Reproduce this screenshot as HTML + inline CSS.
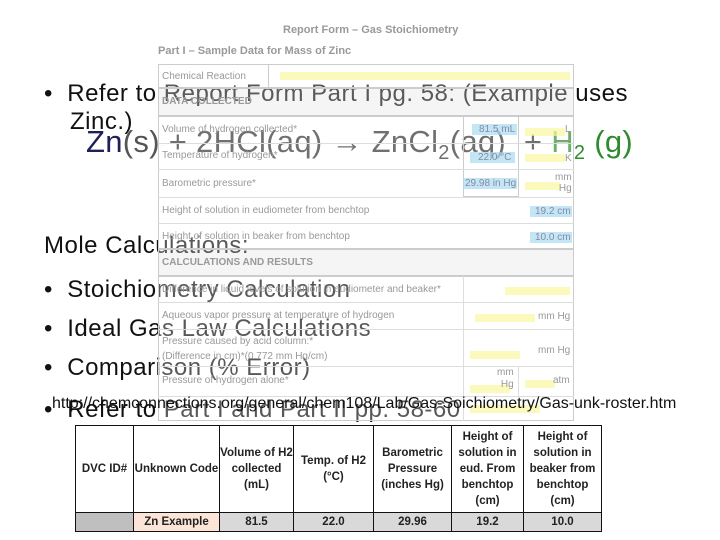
<!DOCTYPE html>
<html><head><meta charset="utf-8"><style>
*{margin:0;padding:0;box-sizing:border-box}
body{width:720px;height:540px;background:#fff;position:relative;overflow:hidden;font-family:"Liberation Sans",sans-serif}
.t{position:absolute;white-space:nowrap;color:#111;font-size:24px;letter-spacing:0.5px}
.f{position:absolute;font-size:10px;color:#999;white-space:nowrap}
.box{position:absolute;border:1px solid #ccc;background:rgba(255,255,255,0.3)}
.hdr{position:absolute;background:rgba(225,225,225,0.35);border:1px solid #ccc}
.hl{position:absolute;height:8px;background:#fbf7a0;opacity:.7}
.bl{position:absolute;height:11px;background:#a9dcef;opacity:.7}
table{position:absolute;left:75px;top:425px;border-collapse:collapse;font-size:11.5px;font-weight:bold;color:#222;background:#fff}
td{border:1px solid #111;text-align:center;vertical-align:middle;line-height:16px;padding:0}
</style></head><body>
<div class="t" style="left:44px;top:80px">•&nbsp; Refer to Report Form Part I pg. 58: (Example uses</div>
<div class="t" style="left:70px;top:108px">Zinc.)</div>
<div class="t" style="left:86px;top:124px;font-size:31px;letter-spacing:0.3px;color:#333"><span style="color:#1f1f5a">Zn</span><span style="color:#555">(s)</span> + 2HCl(aq) &rarr; ZnCl<sub style="font-size:20px">2</sub>(aq) &nbsp;+ <span style="color:#2e8b2e">H<sub style="font-size:20px">2</sub> (g)</span></div>
<div class="t" style="left:44px;top:232px">Mole Calculations:</div>
<div class="t" style="left:44px;top:276px">•&nbsp; Stoichiometry Calculation</div>
<div class="t" style="left:44px;top:315px">•&nbsp; Ideal Gas Law Calculations</div>
<div class="t" style="left:44px;top:354px">•&nbsp; Comparison (% Error)</div>
<div class="t" style="left:44px;top:396px">•&nbsp; Refer to Part I and Part II pp. 58-60</div>
<div class="f" style="left:283px;top:24px;font-size:11px;font-weight:bold">Report Form – Gas Stoichiometry</div>
<div class="f" style="left:158px;top:45px;font-size:11px;font-weight:bold">Part I – Sample Data for Mass of Zinc</div>
<div class="box" style="left:158px;top:64px;width:416px;height:24px"></div>
<div class="f" style="left:162px;top:71px">Chemical Reaction</div>
<div class="box" style="left:268px;top:64px;width:0;height:24px;border-width:0 0 0 1px"></div>
<div class="hl" style="left:280px;top:72px;width:290px"></div>
<div class="hdr" style="left:158px;top:88px;width:416px;height:28px"></div>
<div class="f" style="left:162px;top:96px;font-weight:bold">DATA COLLECTED</div>
<div class="box" style="left:158px;top:116px;width:416px;height:133px"></div>
<div class="box" style="left:463px;top:116px;width:56px;height:81px;background:transparent"></div>
<div style="position:absolute;left:158px;top:143px;width:416px;border-top:1px solid #ddd"></div>
<div style="position:absolute;left:158px;top:169px;width:416px;border-top:1px solid #ddd"></div>
<div style="position:absolute;left:158px;top:197px;width:416px;border-top:1px solid #ddd"></div>
<div style="position:absolute;left:158px;top:223px;width:416px;border-top:1px solid #ddd"></div>
<div class="f" style="left:162px;top:124px">Volume of hydrogen collected*</div>
<div class="f" style="left:162px;top:150px">Temperature of hydrogen*</div>
<div class="f" style="left:162px;top:178px">Barometric pressure*</div>
<div class="f" style="left:162px;top:205px">Height of solution in eudiometer from benchtop</div>
<div class="f" style="left:162px;top:231px">Height of solution in beaker from benchtop</div>
<div class="bl" style="left:472px;top:124px;width:45px"></div><div class="f" style="left:479px;top:124px;color:#88a">81.5 mL</div>
<div class="bl" style="left:470px;top:152px;width:45px"></div><div class="f" style="left:478px;top:152px;color:#88a">22.0 °C</div>
<div class="bl" style="left:463px;top:178px;width:54px"></div><div class="f" style="left:465px;top:178px;color:#88a">29.98 in Hg</div>
<div class="bl" style="left:530px;top:206px;width:42px"></div><div class="f" style="left:535px;top:206px;color:#88a">19.2 cm</div>
<div class="bl" style="left:530px;top:232px;width:42px"></div><div class="f" style="left:535px;top:232px;color:#88a">10.0 cm</div>
<div class="hl" style="left:525px;top:128px;width:40px"></div><div class="f" style="left:565px;top:124px">L</div>
<div class="hl" style="left:525px;top:154px;width:40px"></div><div class="f" style="left:565px;top:153px">K</div>
<div class="hl" style="left:525px;top:182px;width:35px"></div><div class="f" style="left:555px;top:172px;text-align:right">mm<br>Hg</div>
<div class="hdr" style="left:158px;top:249px;width:416px;height:27px"></div>
<div class="f" style="left:162px;top:257px;font-weight:bold">CALCULATIONS AND RESULTS</div>
<div class="box" style="left:158px;top:276px;width:416px;height:145px"></div>
<div style="position:absolute;left:463px;top:276px;height:145px;border-left:1px solid #ddd"></div>
<div style="position:absolute;left:518px;top:366px;height:30px;border-left:1px solid #ddd"></div>
<div style="position:absolute;left:158px;top:302px;width:416px;border-top:1px solid #ddd"></div>
<div style="position:absolute;left:158px;top:329px;width:416px;border-top:1px solid #ddd"></div>
<div style="position:absolute;left:158px;top:366px;width:416px;border-top:1px solid #ddd"></div>
<div style="position:absolute;left:158px;top:396px;width:416px;border-top:1px solid #ddd"></div>
<div class="f" style="left:162px;top:284px">Difference in liquid levels of solution in eudiometer and beaker*</div>
<div class="f" style="left:162px;top:310px">Aqueous vapor pressure at temperature of hydrogen</div>
<div class="f" style="left:162px;top:334px;line-height:15px">Pressure caused by acid column:*<br>(Difference in cm)*(0.772 mm Hg/cm)</div>
<div class="f" style="left:162px;top:375px">Pressure of hydrogen alone*</div>
<div class="hl" style="left:505px;top:287px;width:65px"></div>
<div class="hl" style="left:475px;top:314px;width:60px"></div><div class="f" style="left:538px;top:311px">mm Hg</div>
<div class="hl" style="left:470px;top:351px;width:50px"></div><div class="f" style="left:538px;top:345px">mm Hg</div>
<div class="hl" style="left:470px;top:385px;width:40px"></div><div class="f" style="left:497px;top:367px;text-align:right;line-height:12px">mm<br>Hg</div>
<div class="hl" style="left:525px;top:380px;width:30px"></div><div class="f" style="left:553px;top:375px">atm</div>
<div class="hl" style="left:470px;top:405px;width:70px"></div>
<div class="t" style="left:52px;top:395px;font-size:16px;letter-spacing:0;color:#111">http://chemconnections.org/general/chem108/Lab/Gas-Soichiometry/Gas-unk-roster.htm</div>
<table>
<tr style="height:87px">
<td style="width:58px">DVC ID#</td><td style="width:86px">Unknown Code</td><td style="width:74px">Volume of H2<br>collected<br>(mL)</td><td style="width:80px">Temp. of H2<br>(°C)</td><td style="width:78px">Barometric<br>Pressure<br>(inches Hg)</td><td style="width:72px">Height of<br>solution in<br>eud. From<br>benchtop<br>(cm)</td><td style="width:78px">Height of<br>solution in<br>beaker from<br>benchtop<br>(cm)</td>
</tr>
<tr style="height:19px;background:#d9d9d9">
<td style="background:#bfbfbf"></td><td style="background:#fce4d6">Zn Example</td><td>81.5</td><td>22.0</td><td>29.96</td><td>19.2</td><td>10.0</td>
</tr>
</table>
</body></html>
